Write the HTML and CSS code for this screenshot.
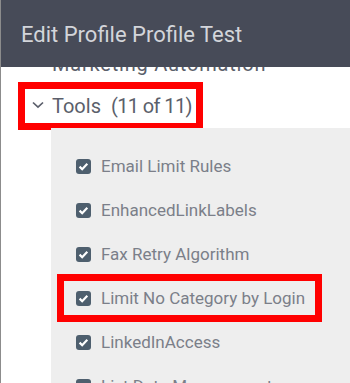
FILE: index.html
```html
<!DOCTYPE html>
<html>
<head>
<meta charset="utf-8">
<link rel="stylesheet" href="styles.css">
</head>
<body>
<div class="page">
  <header class="topbar">
    <h1 class="title">Edit Profile Profile Test</h1>
  </header>
  <div class="viewport">
    <div class="content">
      <div class="section-row">
        <span class="chev-space"></span>
        <span class="section-label wide">Marketing Automation</span>
      </div>
      <div class="section-row highlight tools-row">
        <svg class="chev" width="12" height="8" viewBox="0 0 12 8"><path d="M1 1.5 L6 6.2 L11 1.5" fill="none" stroke="#5b5f6b" stroke-width="1.7"/></svg>
        <span class="section-label">Tools&nbsp; <span class="count">(11 of 11)</span></span>
      </div>
      <div class="panel">
        <div class="item"><span class="cb"><svg width="15" height="15" viewBox="0 0 15 15"><path d="M3.6 7.6 L6.2 10.2 L11.3 4.8" fill="none" stroke="#fff" stroke-width="2.2"/></svg></span><span class="label">Email Limit Rules</span></div>
        <div class="item"><span class="cb"><svg width="15" height="15" viewBox="0 0 15 15"><path d="M3.6 7.6 L6.2 10.2 L11.3 4.8" fill="none" stroke="#fff" stroke-width="2.2"/></svg></span><span class="label">EnhancedLinkLabels</span></div>
        <div class="item"><span class="cb"><svg width="15" height="15" viewBox="0 0 15 15"><path d="M3.6 7.6 L6.2 10.2 L11.3 4.8" fill="none" stroke="#fff" stroke-width="2.2"/></svg></span><span class="label">Fax Retry Algorithm</span></div>
        <div class="item highlight"><span class="cb"><svg width="15" height="15" viewBox="0 0 15 15"><path d="M3.6 7.6 L6.2 10.2 L11.3 4.8" fill="none" stroke="#fff" stroke-width="2.2"/></svg></span><span class="label">Limit No Category by Login</span></div>
        <div class="item"><span class="cb"><svg width="15" height="15" viewBox="0 0 15 15"><path d="M3.6 7.6 L6.2 10.2 L11.3 4.8" fill="none" stroke="#fff" stroke-width="2.2"/></svg></span><span class="label">LinkedInAccess</span></div>
        <div class="item"><span class="cb"><svg width="15" height="15" viewBox="0 0 15 15"><path d="M3.6 7.6 L6.2 10.2 L11.3 4.8" fill="none" stroke="#fff" stroke-width="2.2"/></svg></span><span class="label">List Data Management</span></div>
      </div>
    </div>
  </div>
</div>
</body>
</html>
```
FILE: styles.css
```css
html, body {
  margin: 0;
  padding: 0;
  background: #ffffff;
}
body {
  font-family: Roboto, "Liberation Sans", sans-serif;
  width: 350px;
  height: 383px;
  overflow: hidden;
}
.page {
  height: 383px;
  border-left: 1px solid #8c8c8c;
  box-sizing: border-box;
  display: flex;
  flex-direction: column;
}
.topbar {
  height: 67px;
  flex: none;
  background: #474b58;
  display: flex;
  align-items: center;
  padding-left: 20px;
  position: relative;
  z-index: 2;
}
.title {
  margin: 0;
  margin-top: 2px;
  font-weight: 400;
  font-size: 22px;
  color: #d3d5da;
}
.viewport {
  flex: 1;
  overflow: hidden;
}
.content {
  margin-top: -20px;
  display: flex;
  flex-direction: column;
}
.section-row {
  height: 34px;
  display: flex;
  align-items: center;
  margin-left: 24px;
  padding-left: 7px;
  padding-right: 4px;
  width: fit-content;
}
.chev-space {
  width: 12px;
}
.tools-row {
  margin-top: 8px;
}
.chev {
  display: block;
  margin-top: -2px;
}
.section-label {
  margin-left: 8px;
  font-size: 20px;
  color: #5b5f6b;
  white-space: pre;
}
.section-label.wide {
  letter-spacing: 0.8px;
}
.count {
  letter-spacing: -0.6px;
}
.highlight {
  outline: 7px solid #ff0000;
}
.panel {
  margin-top: 5px;
  margin-left: 50px;
  background: #eeeeee;
  padding-top: 21px;
  padding-bottom: 40px;
  display: flex;
  flex-direction: column;
  gap: 10px;
}
.item {
  height: 34px;
  display: flex;
  align-items: center;
  margin-left: 13px;
  padding-left: 12px;
  padding-right: 10px;
  width: fit-content;
  gap: 10px;
}
.cb {
  width: 15px;
  height: 15px;
  border-radius: 3px;
  background: #4e5f6e;
  display: block;
  flex: none;
}
.cb svg {
  display: block;
}
.label {
  font-size: 17px;
  color: #7b7f89;
  white-space: nowrap;
}
```
